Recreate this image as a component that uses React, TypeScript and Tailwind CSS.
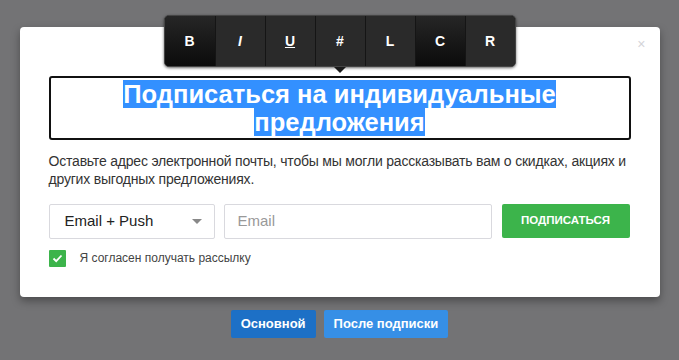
import React from 'react';

const tools = [
  { label: 'B', cls: 'bg-gradient-to-b from-[#262626] to-[#0c0c0c]' },
  { label: 'I', cls: 'bg-[#2a2a2a] italic' },
  { label: 'U', cls: 'bg-[#2a2a2a] underline' },
  { label: '#', cls: 'bg-[#2a2a2a]' },
  { label: 'L', cls: 'bg-[#2a2a2a]' },
  { label: 'C', cls: 'bg-gradient-to-b from-[#262626] to-[#0c0c0c]' },
  { label: 'R', cls: 'bg-[#2a2a2a]' },
];

function Toolbar() {
  return (
    <div className="absolute left-1/2 top-[-12px] -translate-x-1/2">
      <div className="flex h-[52px] overflow-hidden rounded-[5px] border border-[#444] bg-[#111] shadow-[0_1px_3px_rgba(0,0,0,0.6)]">
        {tools.map((t, i) => (
          <div
            key={t.label}
            className={
              'flex w-[50px] items-center justify-center text-[14px] font-bold text-white ' +
              t.cls +
              (i > 0 ? ' border-l border-[#151515]' : '')
            }
          >
            {t.label}
          </div>
        ))}
      </div>
      <div className="mx-auto h-0 w-0 border-x-[6px] border-t-[6px] border-x-transparent border-t-[#1a1a1a]" />
    </div>
  );
}

export default function App() {
  return (
    <div
      className="min-h-[360px] w-full bg-[#737375] pt-[27px]"
      style={{ fontFamily: '"Liberation Sans", Arial, sans-serif' }}
    >
      <div className="relative mx-auto w-[640px] rounded-[4px] bg-white px-[29px] pb-[30px] pt-[49px] shadow-[0_4px_8px_rgba(0,0,0,0.35)]">
        <Toolbar />
        <div className="absolute right-[14px] top-[10px] text-[14px] leading-none text-[#d4d4d8]">×</div>

        <div className="rounded-[3px] border-2 border-[#111] px-2 pb-[2px] pt-[2px] text-center text-[25.5px] font-bold leading-[28px] text-white">
          <span className="bg-[#3390ff]">Подписаться на индивидуальные </span>
          <br />
          <span className="bg-[#3390ff]">предложения</span>
        </div>

        <p className="mt-[12px] text-[14px] leading-[18px] tracking-[-0.2px] text-[#333]">
          Оставьте адрес электронной почты, чтобы мы могли рассказывать вам о скидках, акциях и других выгодных предложениях.
        </p>

        <div className="mt-[16px] flex items-stretch gap-[9px]">
          <div className="flex h-[35px] w-[166px] items-center justify-between rounded-[2px] border border-[#d9d9de] pl-[15px] pr-[12px] text-[15px] text-[#222]">
            <span>Email + Push</span>
            <span className="h-0 w-0 border-x-[5px] border-t-[5px] border-x-transparent border-t-[#888]" />
          </div>
          <div className="flex h-[35px] w-[268px] items-center rounded-[2px] border border-[#d9d9de] px-[13px] text-[15px] text-[#999]">
            Email
          </div>
          <div className="ml-[1px] flex h-[34px] w-[128px] items-center justify-center rounded-[2px] bg-[#3cb44b] text-[11.5px] font-bold text-white">
            ПОДПИСАТЬСЯ
          </div>
        </div>

        <div className="mt-[10px] flex items-center gap-[14px]">
          <div className="flex h-[17px] w-[17px] items-center justify-center rounded-[1px] bg-[#3cb44b]">
            <svg width="11" height="9" viewBox="0 0 11 9" fill="none">
              <path d="M1.5 4.5L4.2 7.2L9.5 1.5" stroke="white" strokeWidth="1.8" />
            </svg>
          </div>
          <span className="text-[12px] text-[#444]">Я согласен получать рассылку</span>
        </div>
      </div>

      <div className="mt-[13px] flex justify-center gap-[8px]">
        <div className="flex h-[28px] items-center rounded-[2px] bg-[#1d70c6] px-[10px] text-[13px] font-bold text-white">
          Основной
        </div>
        <div className="flex h-[28px] items-center rounded-[2px] bg-[#368fe6] px-[10px] text-[13px] font-bold text-white">
          После подписки
        </div>
      </div>
    </div>
  );
}
